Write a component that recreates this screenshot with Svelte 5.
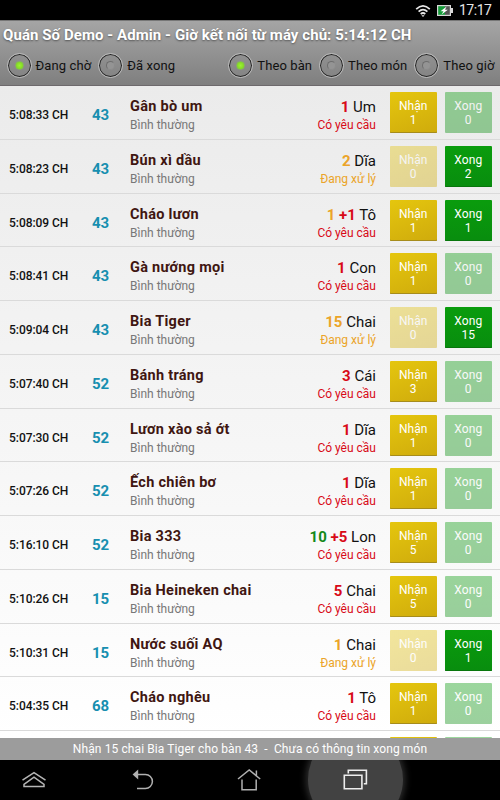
<script>
  const rows = [
    ['5:08:33 CH', '43', 'Gân bò um', [['1', 'red']], 'Um', 1, 0],
    ['5:08:23 CH', '43', 'Bún xì dầu', [['2', 'amber']], 'Dĩa', 0, 2],
    ['5:08:09 CH', '43', 'Cháo lươn', [['1', 'amber'], ['+1', 'red']], 'Tô', 1, 1],
    ['5:08:41 CH', '43', 'Gà nướng mọi', [['1', 'red']], 'Con', 1, 0],
    ['5:09:04 CH', '43', 'Bia Tiger', [['15', 'amber']], 'Chai', 0, 15],
    ['5:07:40 CH', '52', 'Bánh tráng', [['3', 'red']], 'Cái', 3, 0],
    ['5:07:30 CH', '52', 'Lươn xào sả ớt', [['1', 'red']], 'Dĩa', 1, 0],
    ['5:07:26 CH', '52', 'Ếch chiên bơ', [['1', 'red']], 'Dĩa', 1, 0],
    ['5:16:10 CH', '52', 'Bia 333', [['10', 'green'], ['+5', 'red']], 'Lon', 5, 0],
    ['5:10:26 CH', '15', 'Bia Heineken chai', [['5', 'red']], 'Chai', 5, 0],
    ['5:10:31 CH', '15', 'Nước suối AQ', [['1', 'amber']], 'Chai', 0, 1],
    ['5:04:35 CH', '68', 'Cháo nghêu', [['1', 'red']], 'Tô', 1, 0]
  ].map(([time, table, dish, counts, unit, take, done]) => ({ time, table, dish, counts, unit, take, done }));

  let status = $state('Đang chờ');
  let order = $state('Theo bàn');
</script>

{#snippet radio(label, checked, pick)}
  <button class="radio" onclick={pick}>
    <span class="ring"><span class="dot" class:on={checked}></span></span><span class="label">{label}</span>
  </button>
{/snippet}

<div class="screen">
  <div class="statusbar">
    <svg class="wifi" width="16" height="14" viewBox="0 0 16 14" fill="none" stroke="#e8e8e8" stroke-width="1.7">
      <path d="M1.2 5.2Q8 -1.4 14.8 5.2M3.6 7.7Q8 3.5 12.4 7.7M5.7 10Q8 8 10.3 10" />
      <path d="M6.4 11.2h3.2L8 13z" fill="#e8e8e8" stroke="none" />
    </svg>
    <svg class="battery" width="17" height="11" viewBox="0 0 17 11">
      <path d="M0 0h14v3h2v5h-2v3H0z" fill="#d8d8d8" />
      <path d="M1.2 1.2H8v8.6H1.2z" fill="#159a39" /><path d="M8 1.2h4.8v8.6H8z" fill="#555" />
      <path d="M9.7 1.5 3.5 6.2h3L4.5 9.5l6.4-4.7H8z" fill="#fff" />
    </svg>
    <span class="clock">17:17</span>
  </div>

  <header>
    <h1>Quán Số Demo - Admin - Giờ kết nối từ máy chủ: 5:14:12 CH</h1>
    <div class="filters">
      {@render radio('Đang chờ', status === 'Đang chờ', () => (status = 'Đang chờ'))}
      {@render radio('Đã xong', status === 'Đã xong', () => (status = 'Đã xong'))}
      <span class="gap"></span>
      {@render radio('Theo bàn', order === 'Theo bàn', () => (order = 'Theo bàn'))}
      {@render radio('Theo món', order === 'Theo món', () => (order = 'Theo món'))}
      {@render radio('Theo giờ', order === 'Theo giờ', () => (order = 'Theo giờ'))}
    </div>
  </header>

  <main>
    {#each rows as r}
      <div class="row">
        <span class="time">{r.time}</span>
        <span class="table">{r.table}</span>
        <div class="dish"><b>{r.dish}</b><small>Bình thường</small></div>
        <div class="amount">
          <span class="qty">{#each r.counts as [n, color]}<b class={color}>{n}</b>{' '}{/each}{r.unit}</span>
          <small class={r.take ? 'red' : 'amber'}>{r.take ? 'Có yêu cầu' : 'Đang xử lý'}</small>
        </div>
        <button class="action take" class:off={!r.take}><span>Nhận</span><span>{r.take}</span></button>
        <button class="action done" class:off={!r.done}><span>Xong</span><span>{r.done}</span></button>
      </div>
    {/each}
    <div class="row next">
      <span class="action take"></span>
      <span class="action done off"></span>
    </div>
  </main>

  <footer>Nhận 15 chai Bia Tiger cho bàn 43&nbsp; - &nbsp;Chưa có thông tin xong món</footer>

  <nav>
    <div class="slot s1">
      <svg width="26" height="18" viewBox="0 0 26 18" fill="none" stroke="#b5b5b5" stroke-width="1.5">
        <path d="M1.5 9.2 13 1.6l11.5 7.6" /><path d="M3 13.3 13 6.2l10 7.1v2.2H3z" />
      </svg>
    </div>
    <div class="slot s2">
      <svg width="22" height="22" viewBox="0 0 22 22" fill="none" stroke="#b0b0b0" stroke-width="1.5">
        <path d="M5 5.5h8.4a7 7 0 0 1 0 14H5" /><path d="M.6 5.5 6.2 .6v9.8z" fill="#b0b0b0" stroke="none" />
      </svg>
    </div>
    <div class="slot s3">
      <svg width="24" height="24" viewBox="0 0 24 24" fill="none" stroke="#b0b0b0" stroke-width="1.5">
        <path d="M1 11 12.2 2l11 9M19.4 7.6V2.4M5 11.6v10.2h14.2V11.6" />
      </svg>
    </div>
    <div class="slot s4">
      <span class="glow"></span>
      <svg width="25" height="22" viewBox="0 0 25 22" fill="none" stroke="#ededed" stroke-width="1.6">
        <path d="M1.3 6.3h17.6v13.4H1.3z" /><path d="M5.3 4.4V1.3h18.1v13.4h-2.6" />
      </svg>
    </div>
  </nav>
</div>

<style>
  :global(body) { margin: 0; background: #000; overflow: hidden; }
  * { box-sizing: border-box; }
  button { border: 0; padding: 0; margin: 0; font: inherit; background: none; }
  .screen { width: 500px; height: 800px; display: flex; flex-direction: column; overflow: hidden; font-family: Roboto, sans-serif; background: #000; }
  .statusbar { height: 20px; flex: none; display: flex; align-items: center; padding-left: 415px; color: #e6e6e6; }
  .wifi { margin-top: 1px; }
  .battery { margin-left: 6px; margin-top: 1px; }
  .clock { margin-left: 5px; font-size: 14px; line-height: 20px; letter-spacing: -.5px; white-space: nowrap; }
  header { height: 66px; flex: none; background: linear-gradient(#a5a5a5, #7f7f7f); border-top: 1px solid #777; border-bottom: 1px solid #6d696c; }
  h1 { margin: 0; padding: 4px 0 0 3px; font-size: 15px; line-height: 21px; font-weight: 700; letter-spacing: .07px; color: #fff; white-space: nowrap; text-shadow: 0 1px 2px #555; }
  .filters { display: flex; align-items: center; height: 38px; padding-left: 6.5px; }
  .radio { display: flex; align-items: center; white-space: nowrap; font-size: 13px; letter-spacing: .1px; color: #111; margin-right: 7px; line-height: 24px; }
  .radio:last-child { margin-right: 5.5px; }
  .label { padding-top: 2px; }
  .ring { width: 25px; height: 25px; flex: none; border: 1px solid #bdbdbd; border-radius: 50%; display: flex; align-items: center; justify-content: center; margin-right: 4px; box-shadow: inset 0 0 0 1px #272727; }
  .dot { width: 9px; height: 9px; border-radius: 50%; border: 1px solid #8c8c8c; border-top-color: #6d6d6d; border-left-color: #6d6d6d; background: #949494; }
  .dot.on { background: radial-gradient(#9cf035, #78d318); border-color: #86b85a; }
  .gap { flex: 1; }
  main { height: 652px; flex: none; overflow: hidden; background: linear-gradient(#ebebeb, #fff); }
  .row { height: 53.75px; display: flex; align-items: flex-start; border-bottom: 1px solid #dadada; white-space: nowrap; }
  .next { padding-left: 376px; }
  .time { width: 92px; padding-left: 9px; font-size: 12px; line-height: 20px; padding-top: 19px; font-weight: 500; letter-spacing: -.05px; color: #111; }
  .table { width: 38px; padding-top: 18px; font-size: 15px; line-height: 22px; font-weight: 700; color: #178fb0; }
  .dish { width: 130px; padding-top: 10px; display: flex; flex-direction: column; color: #401611; }
  .dish b { font-size: 14.5px; line-height: 22px; letter-spacing: .28px; }
  small { font-size: 12px; line-height: 14px; color: #777; }
  .amount { width: 116px; padding-top: 10px; display: flex; flex-direction: column; align-items: flex-end; }
  .qty { font-size: 15px; line-height: 22px; color: #111; }
  .red { color: #d80a18; }
  .amber { color: #eba428; }
  .green { color: #128818; }
  .action { width: 46.5px; height: 41px; margin: 6px 0 0 14px; flex: none; display: flex; flex-direction: column; align-items: center; padding-top: 7px; font-size: 12px; line-height: 14px; letter-spacing: .1px; color: #fff; border-radius: 1px; }
  .take { background: linear-gradient(160deg, #e5c60e, #cfab0c); box-shadow: inset 0 -1px #a68c1c; }
  .done { margin-left: 8.5px; background: linear-gradient(#0a9c0d, #088d0e); box-shadow: inset 0 -1px #08760c; }
  .off { opacity: .4; box-shadow: none; }
  footer { height: 22px; flex: none; background: #9c9c9c; color: #fff; text-align: center; font-size: 12px; line-height: 22px; letter-spacing: .1px; white-space: nowrap; }
  nav { height: 40px; flex: none; display: flex; padding-left: 21px; overflow: hidden; background: #000; }
  .slot { display: flex; align-items: center; justify-content: center; position: relative; }
  .s1 { width: 26px; }
  .s2 { width: 22px; margin-left: 85px; }
  .s3 { width: 24px; margin-left: 83px; }
  .s4 { width: 95px; margin-left: 47px; }
  .slot svg { position: relative; }
  .glow { position: absolute; width: 95px; height: 95px; top: -28px; left: 0; border-radius: 50%; background: #424242; box-shadow: 0 0 7px 2px #303030; }
</style>
